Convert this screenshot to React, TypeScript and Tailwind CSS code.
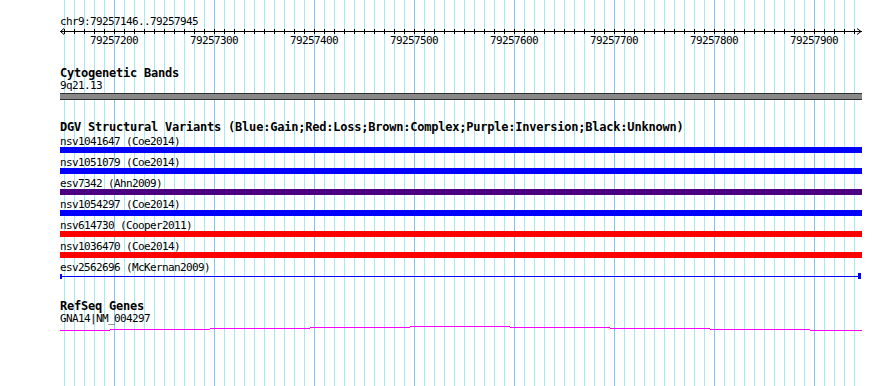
import React from 'react'

const FONT = { fontFamily: '"DejaVu Sans Mono", "Liberation Mono", monospace' }

// grid lines every 10px, darker every 100px (x relative to the track area)
const gridXs = Array.from({ length: 80 }, (_, i) => 4 + i * 10)
const rulerLabels = Array.from({ length: 8 }, (_, i) => 79257200 + i * 100)

interface Variant {
  name: string
  color: string
}

const variants: Variant[] = [
  { name: 'nsv1041647 (Coe2014)', color: 'bg-[#0000ff]' },
  { name: 'nsv1051079 (Coe2014)', color: 'bg-[#0000ff]' },
  { name: 'esv7342 (Ahn2009)', color: 'bg-[#4b0082]' },
  { name: 'nsv1054297 (Coe2014)', color: 'bg-[#0000ff]' },
  { name: 'nsv614730 (Cooper2011)', color: 'bg-[#ff0000]' },
  { name: 'nsv1036470 (Coe2014)', color: 'bg-[#ff0000]' },
]

// refseq gene line: slight arch, one step per 100px
const geneSegs = [
  { x: 0, w: 50, y: 6 },
  { x: 50, w: 100, y: 5 },
  { x: 150, w: 100, y: 4 },
  { x: 250, w: 100, y: 3 },
  { x: 350, w: 100, y: 2 },
  { x: 450, w: 100, y: 3 },
  { x: 550, w: 100, y: 4 },
  { x: 650, w: 100, y: 5 },
  { x: 750, w: 52, y: 6 },
]

function Grid() {
  return (
    <svg
      className="absolute left-[60px] top-0"
      width={802}
      height={386}
      shapeRendering="crispEdges"
    >
      {gridXs.map((x) => (
        <rect
          key={x}
          x={x}
          y={0}
          width={1}
          height={386}
          fill={(x - 54) % 100 === 0 ? '#7cc8f0' : '#a4eaf0'}
        />
      ))}
    </svg>
  )
}

function Ruler() {
  return (
    <svg className="block" width={802} height={8} shapeRendering="crispEdges">
      <rect x={0} y={4} width={802} height={1} fill="#000" />
      {gridXs.map((x) => (
        <rect key={x} x={x} y={2} width={1} height={5} fill="#000" />
      ))}
      <polyline
        points="4,1.5 0.5,4.5 4,7.5"
        fill="none"
        stroke="#000"
        strokeWidth={1}
        shapeRendering="auto"
      />
      <polyline
        points="797,1.5 801,4.5 797,7.5"
        fill="none"
        stroke="#000"
        strokeWidth={1}
        shapeRendering="auto"
      />
    </svg>
  )
}

function Label({ children, bold }: { children: React.ReactNode; bold?: boolean }) {
  if (bold) {
    return (
      <div className="h-[12px] leading-[12px] text-[12px] tracking-[-0.22px] font-bold text-black whitespace-nowrap">
        {children}
      </div>
    )
  }
  return (
    <div className="h-[11px] leading-[11px] text-[11px] tracking-[-0.62px] text-black whitespace-nowrap">
      {children}
    </div>
  )
}

export default function App() {
  return (
    <div className="relative w-[890px] h-[386px] bg-white overflow-hidden" style={FONT}>
      <Grid />

      <div className="relative ml-[60px] w-[802px] pt-[16px]">
        {/* Position + ruler */}
        <Label>chr9:79257146..79257945</Label>
        <Ruler />
        <div className="relative h-[11px]">
          {rulerLabels.map((n, i) => (
            <div
              key={n}
              className="absolute top-0 w-[48px] text-center h-[11px] leading-[11px] text-[11px] tracking-[-0.62px] text-black"
              style={{ left: 30 + i * 100 }}
            >
              {n}
            </div>
          ))}
        </div>

        {/* Cytogenetic Bands */}
        <div className="mt-[21px]">
          <Label bold>Cytogenetic Bands</Label>
        </div>
        <div className="mt-[1px]">
          <Label>9q21.13</Label>
        </div>
        <div className="mt-[2px] h-[7px] bg-[#888888] border-t border-b border-[#303030]" />

        {/* DGV */}
        <div className="mt-[21px]">
          <Label bold>
            DGV Structural Variants (Blue:Gain;Red:Loss;Brown:Complex;Purple:Inversion;Black:Unknown)
          </Label>
        </div>
        <div className="mt-[3px] flex flex-col gap-[4px]">
          {variants.map((v) => (
            <div key={v.name}>
              <Label>{v.name}</Label>
              <div className={`h-[6px] ${v.color}`} />
            </div>
          ))}
          <div>
            <Label>esv2562696 (McKernan2009)</Label>
            <div className="h-[6px] flex items-center">
              <div className="w-[2px] h-[5px] bg-[#0000ff]" />
              <div className="flex-1 h-[1px] bg-[#0000ff]" />
              <div className="w-[3px] h-[6px] bg-[#0000ff]" />
              <div className="w-[1px]" />
            </div>
          </div>
        </div>

        {/* RefSeq */}
        <div className="mt-[21px]">
          <Label bold>RefSeq Genes</Label>
        </div>
        <div className="mt-[1px]">
          <Label>GNA14|NM_004297</Label>
        </div>
        <svg className="block" width={802} height={8} shapeRendering="crispEdges">
          {geneSegs.map((s) => (
            <rect key={s.x} x={s.x} y={s.y} width={s.w} height={1} fill="#ff00ff" />
          ))}
        </svg>
      </div>
    </div>
  )
}
